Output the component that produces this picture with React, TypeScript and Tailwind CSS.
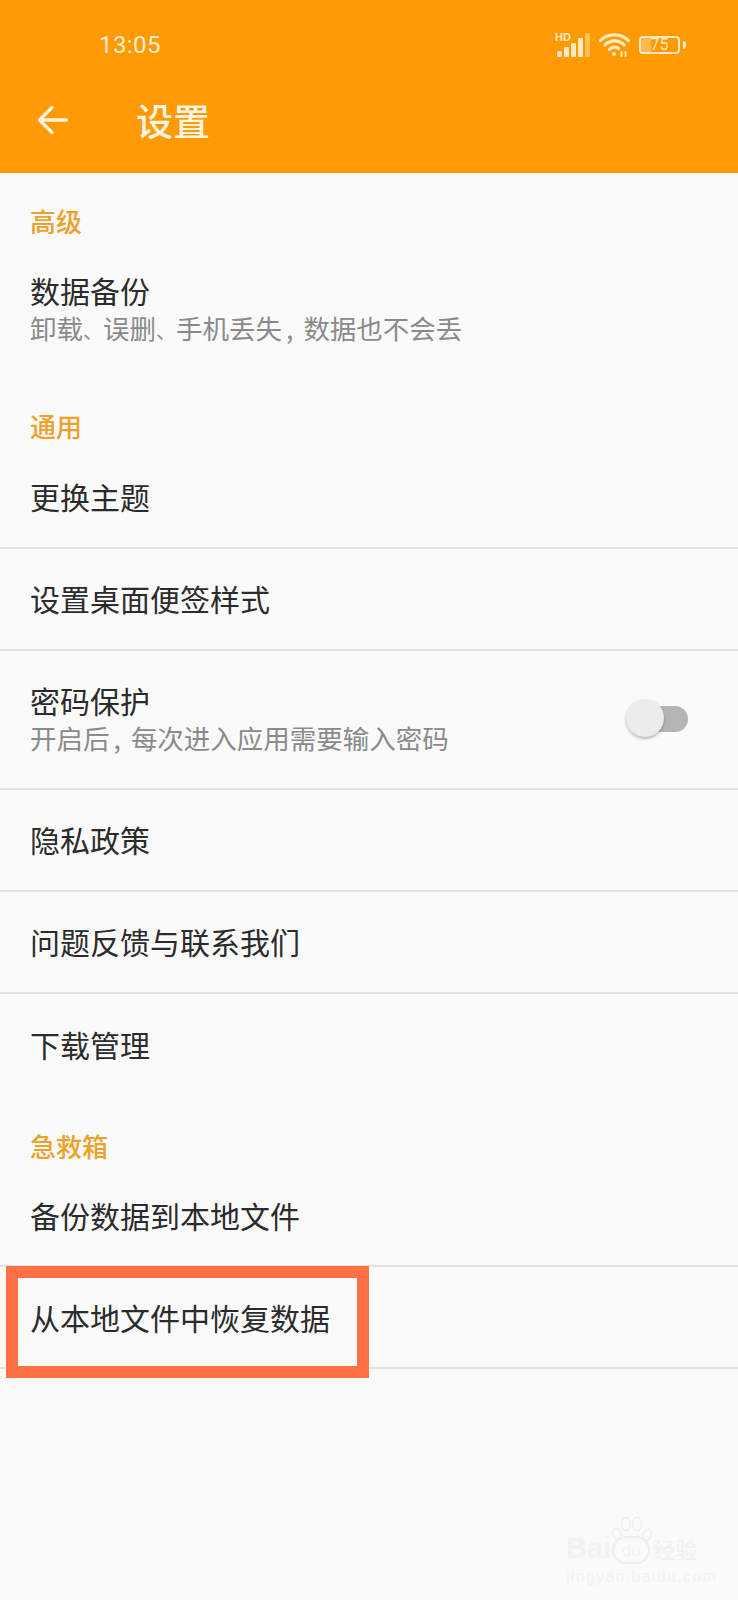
const cjk = "font-['Noto_Sans_CJK_SC',sans-serif]"

function SectionTitle({ title, className }: { title: string; className: string }) {
  return (
    <div className={`flex h-9 items-center px-[30px] pb-[2px] text-[26px] font-medium text-[#eda02a] ${className}`}>{title}</div>
  )
}

function Row({ title, sub, line = true, height = 'h-[102px]', children }: { title: string; sub?: React.ReactNode; line?: boolean; height?: string; children?: React.ReactNode }) {
  return (
    <div className={`flex items-center justify-between pl-[30px] pr-[50px] ${height} ${line ? 'border-b-2 border-[#e2e2e2]' : ''}`}>
      <div className="flex flex-col">
        <div className="text-[30px] leading-[36px] text-[#2b2b2b]">{title}</div>
        {sub && <div className="mt-[1px] text-[26.5px] leading-[38px] text-[#8a8a8a]">{sub}</div>}
      </div>
      {children}
    </div>
  )
}

function Comma() {
  return <span className="mr-[10px] ml-[4px]">,</span>
}

function Dun() {
  return <span className="text-[20px]">、</span>
}

function Toggle() {
  return (
    <div className="relative mb-[2px] h-[26px] w-[50px]">
      <div className="absolute top-0 right-0 h-[26px] w-[40px] rounded-full bg-[#b5b5b5]" />
      <div className="absolute top-[-7px] left-[-12px] h-[38px] w-[38px] rounded-full bg-[#ececec] shadow-[0_2px_3px_rgba(0,0,0,0.25)]" />
    </div>
  )
}

function StatusIcons() {
  return (
    <div className="flex items-center gap-[8px]">
      <svg width="35" height="26" viewBox="0 0 35 26" fill="#ffe9bf">
        <text x="0" y="9" fontSize="11" fontWeight="700" fontFamily="Liberation Sans">HD</text>
        <rect x="2" y="19" width="5" height="6" rx="1.5" />
        <rect x="9" y="15" width="5" height="10" rx="1" />
        <rect x="16" y="11" width="5" height="14" rx="1" />
        <rect x="23" y="6" width="5" height="19" rx="1" />
        <rect x="30" y="1" width="5" height="24" rx="1" opacity="0.45" />
      </svg>
      <svg width="33" height="25" viewBox="0 0 32 25" fill="none" stroke="#ffe9bf" strokeWidth="3.2" strokeLinecap="round">
        <path d="M2 8.5C9 1 22 1 30 8.5" />
        <path d="M6.5 13C11.5 7.5 20.5 7.5 25.5 13" />
        <path d="M11 17.5C13.5 14.5 18 14.5 20 16.5" />
        <circle cx="15.5" cy="22" r="2" fill="#ffe9bf" stroke="none" />
        <path d="M23 20v4M27 20v4" strokeWidth="2" />
      </svg>
      <div className="flex items-center gap-[3px]">
        <div className="relative flex h-[18px] w-[41px] items-center justify-center overflow-hidden rounded-[4px] border-2 border-[#ffe9bf] text-[16px] text-[#ffe9bf]">
          <div className="absolute inset-y-0 left-0 w-[10px] bg-[#ffb84f]" />
          <span className="relative font-['Roboto',sans-serif]">75</span>
        </div>
        <div className="h-[8px] w-[3px] rounded-r-sm bg-[#ffe9bf]" />
      </div>
    </div>
  )
}

function Watermark() {
  return (
    <div className="absolute top-[1532px] left-[566px] flex flex-col items-start text-[#f2f2f2]">
      <div className="flex items-end">
        <span className="text-[29px] leading-[32px] font-bold font-['Liberation_Sans',sans-serif]">Bai</span>
        <div className="relative mx-[1px] flex h-[28px] w-[38px] items-center justify-center rounded-full border-2 border-[#eeeeee] text-[17px] leading-none font-['Liberation_Sans',sans-serif]">
          du
          <svg className="absolute top-[-22px] left-[-3px]" width="42" height="30" viewBox="0 0 42 30" fill="none" stroke="#eeeeee" strokeWidth="1.5">
            <ellipse cx="6" cy="18" rx="4" ry="6" transform="rotate(-25 6 18)" />
            <ellipse cx="15" cy="8" rx="4.5" ry="6.5" />
            <ellipse cx="26" cy="8" rx="4.5" ry="6.5" />
            <ellipse cx="36" cy="19" rx="4" ry="6" transform="rotate(25 36 19)" />
          </svg>
        </div>
        <span className="ml-[2px] text-[22px] leading-[32px] font-medium">经验</span>
      </div>
      <div className="mt-[2px] text-[16px] leading-[22px] tracking-[1.3px] font-['Liberation_Sans',sans-serif]">jingyan.baidu.com</div>
    </div>
  )
}

export default function App() {
  return (
    <div className={`relative h-[1600px] w-[738px] overflow-hidden bg-[#fafafa] ${cjk}`}>
      <header className="h-[173px] bg-[#ff9a05]">
        <div className="flex h-[88px] items-center justify-between pt-[1px] pr-[52px] pl-[99px]">
          <span className="text-[24px] tracking-[0.4px] text-[#ffeccb] font-['Roboto',sans-serif]">13:05</span>
          <StatusIcons />
        </div>
        <div className="flex h-[64px] items-center pl-[37px]">
          <svg width="32" height="30" viewBox="0 0 32 30" fill="none" stroke="#fff4e0" strokeWidth="3.4" strokeLinecap="round" strokeLinejoin="round">
            <path d="M29.5 15H3M15 2.5 2.5 15 15 27.5" />
          </svg>
          <h1 className="ml-[67px] pt-[2px] text-[37px] font-medium text-[#fff4e0]">设置</h1>
        </div>
      </header>

      <SectionTitle title="高级" className="mt-[30px]" />
      <Row
        title="数据备份"
        height="h-[139px] pt-[5px]"
        line={false}
        sub={<>卸载<Dun />误删<Dun />手机丢失<Comma />数据也不会丢</>}
      />

      <SectionTitle title="通用" className="mt-[30px]" />
      <Row title="更换主题" height="h-[105px]" />
      <Row title="设置桌面便签样式" height="h-[102px] pb-[2px]" />
      <Row title="密码保护" height="h-[139px]" sub={<>开启后<Comma />每次进入应用需要输入密码</>}>
        <Toggle />
      </Row>
      <Row title="隐私政策" height="h-[102px] pb-[2px]" />
      <Row title="问题反馈与联系我们" height="h-[102px] pb-[2px]" />
      <Row title="下载管理" height="h-[102px] pb-[2px]" line={false} />

      <SectionTitle title="急救箱" className="mt-[32px]" />
      <Row title="备份数据到本地文件" height="h-[103px]" />
      <Row title="从本地文件中恢复数据" />

      {/* annotation drawn over the screenshot */}
      <div className="absolute top-[1266px] left-[6px] h-[112px] w-[363px] border-[12px] border-[#ff7043]" />
      <Watermark />
    </div>
  )
}
